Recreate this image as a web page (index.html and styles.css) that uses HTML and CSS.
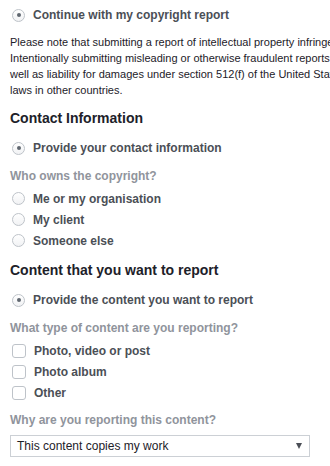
FILE: index.html
```html
<!DOCTYPE html>
<html>
  <head>
    <title>Copyright report</title>
    <meta charset="utf-8">
    <link rel="stylesheet" href="styles.css">
  </head>
  <body>
    <div class="report-form">

      <label class="option option-single">
        <span class="radio checked"></span>
        <span class="option-text">Continue with my copyright report</span>
      </label>

      <p class="notice">Please note that submitting a report of intellectual property infringement is a serious matter with potential legal consequences.<br>Intentionally submitting misleading or otherwise fraudulent reports of infringement may result in the termination of your account as<br>well as liability for damages under section 512(f) of the United States Copyright Act or similar<br>laws in other countries.</p>

      <h2 class="section-title">Contact Information</h2>

      <label class="option option-single">
        <span class="radio checked"></span>
        <span class="option-text">Provide your contact information</span>
      </label>

      <div class="question">Who owns the copyright?</div>
      <div class="option-list">
        <label class="option">
          <span class="radio"></span>
          <span class="option-text">Me or my organisation</span>
        </label>
        <label class="option">
          <span class="radio"></span>
          <span class="option-text">My client</span>
        </label>
        <label class="option">
          <span class="radio"></span>
          <span class="option-text">Someone else</span>
        </label>
      </div>

      <h2 class="section-title">Content that you want to report</h2>

      <label class="option option-single">
        <span class="radio checked"></span>
        <span class="option-text">Provide the content you want to report</span>
      </label>

      <div class="question">What type of content are you reporting?</div>
      <div class="option-list">
        <label class="option">
          <span class="checkbox"></span>
          <span class="option-text">Photo, video or post</span>
        </label>
        <label class="option">
          <span class="checkbox"></span>
          <span class="option-text">Photo album</span>
        </label>
        <label class="option">
          <span class="checkbox"></span>
          <span class="option-text">Other</span>
        </label>
      </div>

      <div class="question question-select">Why are you reporting this content?</div>
      <div class="select">
        <span class="select-value">This content copies my work</span>
        <span class="select-arrow"></span>
      </div>

    </div>
  </body>
</html>
```

FILE: styles.css
```css
body {
  margin: 0;
  background-color: #ffffff;
  overflow: hidden;
  font-family: "Liberation Sans", Arial, Helvetica, sans-serif;
  font-size: 12px;
  color: #1d2129;
}

.report-form {
  width: 900px;
  padding: 5px 10px 0 10px;
}

.option {
  display: flex;
  align-items: center;
  gap: 8px;
  height: 21px;
  padding-left: 2px;
}

.option-single {
  height: 20px;
}

.option-text {
  font-weight: bold;
  color: #4b4f56;
  white-space: nowrap;
}

.radio {
  position: relative;
  box-sizing: border-box;
  width: 13px;
  height: 13px;
  border: 1px solid #bec3c9;
  border-radius: 50%;
  background: linear-gradient(#ffffff, #f1f2f4);
}

.radio.checked::after {
  content: "";
  position: absolute;
  left: 3.5px;
  top: 3.5px;
  width: 4px;
  height: 4px;
  border-radius: 50%;
  background-color: #606770;
}

.checkbox {
  box-sizing: border-box;
  width: 14px;
  height: 14px;
  border: 1px solid #bec3c9;
  border-radius: 3px;
  background-color: #ffffff;
}

.notice {
  margin: 9px 0 11px 0;
  font-size: 11px;
  line-height: 16px;
  white-space: nowrap;
  color: #1d2129;
}

.section-title {
  margin: 10px 0 11px 0;
  font-size: 14px;
  line-height: 18px;
  color: #1d2129;
}

.question {
  margin: 10px 0 4px 0;
  line-height: 16px;
  font-weight: bold;
  color: #90949c;
}

.option-list {
  margin-bottom: 10px;
}

.question-select {
  margin-top: -1px;
  margin-bottom: 7px;
}

.select {
  box-sizing: border-box;
  display: flex;
  align-items: center;
  justify-content: space-between;
  width: 300px;
  height: 22px;
  padding: 0 7px 0 6px;
  border: 1px solid #ccd0d5;
  color: #1d2129;
}

.select-arrow {
  width: 0;
  height: 0;
  border-left: 3.5px solid transparent;
  border-right: 3.5px solid transparent;
  border-top: 6px solid #4b4f56;
}
```
